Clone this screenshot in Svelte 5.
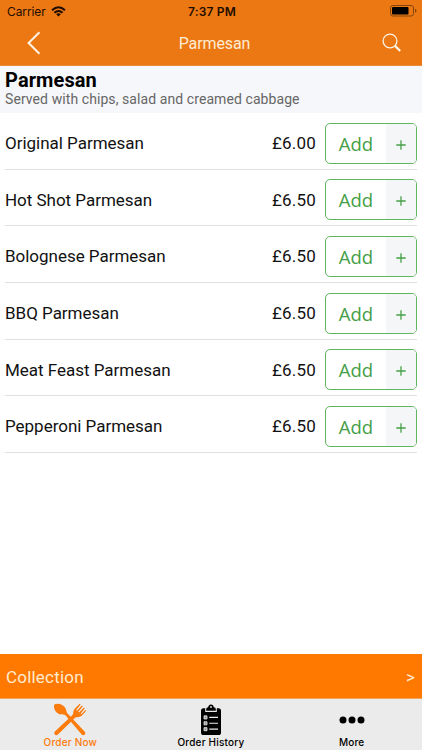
<script lang="ts">
    type Item = { name: string; price: string };

    const items: Item[] = [
        { name: 'Original Parmesan', price: '£6.00' },
        { name: 'Hot Shot Parmesan', price: '£6.50' },
        { name: 'Bolognese Parmesan', price: '£6.50' },
        { name: 'BBQ Parmesan', price: '£6.50' },
        { name: 'Meat Feast Parmesan', price: '£6.50' },
        { name: 'Pepperoni Parmesan', price: '£6.50' }
    ];
</script>

<div class="screen">
    <header>
        <div class="status-bar">
            <div class="carrier">
                <span>Carrier</span>
                <svg width="15" height="11" viewBox="0 0 15 11" fill="none" stroke="#1c0d00" stroke-width="2">
                    <path d="M1 4.3Q7.5-1.7 14 4.3" />
                    <path d="M3.4 6.8Q7.5 3.1 11.6 6.8" />
                    <path d="M7.5 10.5L5.2 8.3Q7.5 6.4 9.8 8.3Z" fill="#1c0d00" stroke="none" />
                </svg>
            </div>
            <span class="time">7:37 PM</span>
            <svg class="battery" width="27" height="12" viewBox="0 0 27 12">
                <rect x="0.5" y="0.5" width="23" height="10.5" rx="2.4" fill="none" stroke="#84450f" />
                <rect x="2" y="2" width="16.5" height="7.5" rx="1" fill="#000" />
                <path d="M25 3.8Q26.5 4.2 26.5 5.8T25 7.8Z" fill="#84450f" />
            </svg>
        </div>
        <nav>
            <svg class="back" width="14" height="24" viewBox="0 0 14 24" fill="none" stroke="#fff4e6" stroke-width="2">
                <path d="M12.4 1.2L1.6 12L12.4 22.8" />
            </svg>
            <h1>Parmesan</h1>
            <svg class="search" width="20" height="20" viewBox="0 0 20 20" fill="none" stroke="#fff4e6">
                <circle cx="8" cy="8" r="6.9" stroke-width="1.3" />
                <path d="M12.8 12.6L18.2 18" stroke-width="2.2" />
            </svg>
        </nav>
    </header>

    <section class="category">
        <h2>Parmesan</h2>
        <p>Served with chips, salad and creamed cabbage</p>
    </section>

    <ul class="items">
        {#each items as { name, price }}
            <li>
                <span class="name">{name}</span>
                <span class="price">{price}</span>
                <button>
                    <span class="add">Add</span>
                    <span class="plus">
                        <svg width="10" height="10" viewBox="0 0 10 10" stroke="#45a047" stroke-width="1.3">
                            <path d="M5 0.3V9.7M0.3 5H9.7" />
                        </svg>
                    </span>
                </button>
            </li>
        {/each}
    </ul>

    <div class="collection">
        <span>Collection</span>
        <span class="arrow">&gt;</span>
    </div>

    <footer>
        <div class="tab active">
            <svg width="34" height="33" viewBox="0 0 34 33" fill="#fb7b0c">
                <path d="M1.4 1.6C4.5-.2 9.6 1 12 4.6C13.7 7.2 13.3 9 14.1 10.1L31.8 28.7Q33 30.4 31.6 31.7Q30 32.8 28.5 31.3L12.2 12.1C10.5 11.2 8.8 12.3 6 10.9C2.3 9.2-.1 4.7 1.4 1.6Z" />
                <path d="M26.6 .8L27.5 1.6L23.2 7L24 7.7L28.8 2.6L29.7 3.4L25.3 8.7L26.1 9.4L31 4.5L31.8 5.3L27.6 10.7L28.3 11.3L32.5 7L33.2 7.7L29 12.5C26.8 14.6 24.3 13.9 22.4 14.6L4.9 31.4Q3.2 32.8 1.7 31.5Q.5 29.9 1.9 28.4L19.5 11.9C20.8 10.1 19.8 8.2 21.5 6Z" />
            </svg>
            <span>Order Now</span>
        </div>
        <div class="tab">
            <svg width="22" height="32" viewBox="0 0 22 31" preserveAspectRatio="none">
                <path d="M3.5 4H5.2V7.7H16.8V4H18.5Q21 4 21 6.5V27.5Q21 30 18.5 30H3.5Q1 30 1 27.5V6.5Q1 4 3.5 4Z" />
                <path d="M6.2 6.5V4.8Q6.2 3.4 8.2 3.2Q8.6 .5 11 .5T13.8 3.2Q15.8 3.4 15.8 4.8V6.5Z" />
                <circle cx="11" cy="2.9" r=".9" fill="#ebebeb" />
                <path d="M4 11.5H7V14.5H4ZM4 17.2H7V20.2H4ZM4 22.9H7V25.9H4Z" fill="#999" stroke="#ebebeb" stroke-width=".8" />
                <path d="M9.3 13H18M9.3 18.7H18M9.3 24.4H18" stroke="#ebebeb" stroke-width="1.1" />
            </svg>
            <span>Order History</span>
        </div>
        <div class="tab">
            <svg width="26" height="8" viewBox="0 0 26 8">
                <circle cx="4" cy="4" r="3.5" />
                <circle cx="13" cy="4" r="3.5" />
                <circle cx="22" cy="4" r="3.5" />
            </svg>
            <span>More</span>
        </div>
    </footer>
</div>

<style>
    :global(body) {
        background: #fff;
    }

    .screen {
        display: flex;
        flex-direction: column;
        height: 750px;
        font-family: Roboto, sans-serif;
        color: #111;
    }

    h1, h2, p, ul {
        margin: 0;
        padding: 0;
    }

    svg {
        display: block;
        flex: none;
    }

    header {
        height: 66px;
        box-sizing: border-box;
        background: #ec7813;
        border-bottom: 1px solid #e68d3f;
    }

    .status-bar {
        display: grid;
        grid-template-columns: 1fr auto 1fr;
        align-items: center;
        height: 22px;
        padding: 0 5px 0 7px;
        font-family: Inter, sans-serif;
        font-size: 12px;
        color: #1c0d00;
    }

    .carrier {
        display: flex;
        align-items: center;
        gap: 5px;
        letter-spacing: -0.1px;
    }

    .time {
        font-weight: 600;
        letter-spacing: 0.2px;
    }

    .battery {
        justify-self: end;
    }

    nav {
        display: grid;
        grid-template-columns: 1fr auto 1fr;
        align-items: center;
        height: 42px;
        padding: 0 20px 0 27px;
    }

    h1 {
        font-size: 16px;
        font-weight: 400;
        letter-spacing: -0.1px;
        color: #ffecd4;
    }

    .search {
        justify-self: end;
    }

    .category {
        height: 47px;
        background: #f6f7fa;
    }

    h2 {
        padding: 3px 5px 0;
        font-size: 20px;
        line-height: 23px;
        font-weight: 700;
        letter-spacing: 0.1px;
        color: #000;
    }

    .category p {
        padding-left: 5px;
        font-size: 14px;
        line-height: 15px;
        letter-spacing: 0.08px;
        color: #666;
    }

    .items {
        flex: 1;
        list-style: none;
    }

    .items li {
        display: flex;
        align-items: center;
        height: 56.7px;
        box-sizing: border-box;
        margin: 0 5px;
        padding-top: 4.4px;
        border-bottom: 1px solid #e0e0e0;
        font-size: 17px;
    }

    .name {
        flex: 1;
        letter-spacing: -0.02px;
    }

    .price {
        margin-right: 9px;
        letter-spacing: 0.2px;
    }

    button {
        display: flex;
        width: 92px;
        height: 41px;
        padding: 0;
        overflow: hidden;
        border: 1px solid #5fb560;
        border-radius: 5px;
        background: #fff;
        color: #45a047;
    }

    .add {
        width: 60px;
        font-family: "Open Sans", sans-serif;
        font-size: 18.5px;
        line-height: 39px;
        text-align: center;
    }

    .plus {
        display: flex;
        flex: 1;
        align-items: center;
        justify-content: center;
        padding-top: 3px;
        background: #f5f6f8;
    }

    .collection {
        display: flex;
        align-items: center;
        justify-content: space-between;
        height: 45px;
        box-sizing: border-box;
        padding: 1px 7px 0 6px;
        border-bottom: 1px solid #f2a45c;
        background: #ff7800;
        font-size: 17px;
        letter-spacing: 0.2px;
        color: #ffeccf;
    }

    footer {
        display: grid;
        grid-template-columns: repeat(3, 1fr);
        height: 51px;
        background: #ebebeb;
    }

    .tab {
        display: flex;
        flex-direction: column;
        align-items: center;
        justify-content: space-between;
        box-sizing: border-box;
        padding-top: 4px;
        font-family: Inter, sans-serif;
        font-size: 10px;
        font-weight: 500;
        color: #000;
    }

    .tab svg {
        margin: auto;
    }

    .tab span {
        height: 14px;
        line-height: 13px;
        letter-spacing: 0.2px;
    }

    .active {
        color: #fb7b0c;
    }
</style>
